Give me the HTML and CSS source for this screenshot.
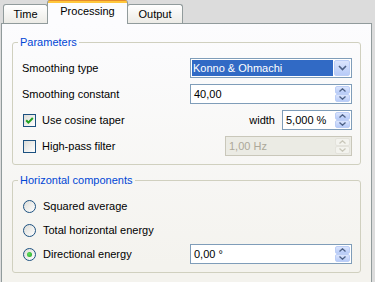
FILE: index.html
```html
<!DOCTYPE html>
<html lang="en">
<head>
    <meta charset="UTF-8">
    <title>Processing</title>
    <link rel="stylesheet" href="styles.css">
</head>
<body>
    <div class="tabs">
        <div class="tab tab-time">Time</div>
        <div class="tab tab-processing active">Processing</div>
        <div class="tab tab-output">Output</div>
    </div>

    <div class="panel">
        <fieldset class="group group-params">
            <legend>Parameters</legend>
            <div class="row">
                <span>Smoothing type</span>
                <div class="combo">
                    <span class="combo-value">Konno &amp; Ohmachi</span>
                    <span class="drop-btn">
                        <svg width="9" height="6" viewBox="0 0 9 6"><path d="M1 1 L4.5 4.5 L8 1" fill="none" stroke="#4d6185" stroke-width="1.6"/></svg>
                    </span>
                </div>
            </div>
            <div class="row">
                <span>Smoothing constant</span>
                <div class="spin spin-wide">
                    <span class="spin-value">40,00</span>
                    <span class="spin-btns">
                        <span class="spin-btn"><svg width="7" height="4" viewBox="0 0 7 4"><path d="M0.5 3.5 L3.5 0.8 L6.5 3.5" fill="none" stroke="#4d6185" stroke-width="1.3"/></svg></span>
                        <span class="spin-btn"><svg width="7" height="4" viewBox="0 0 7 4"><path d="M0.5 0.5 L3.5 3.2 L6.5 0.5" fill="none" stroke="#4d6185" stroke-width="1.3"/></svg></span>
                    </span>
                </div>
            </div>
            <div class="row">
                <label class="check">
                    <span class="box">
                        <svg width="11" height="11" viewBox="0 0 11 11"><path d="M2.2 5.2 L4.4 7.6 L8.8 3" fill="none" stroke="#21a121" stroke-width="2"/></svg>
                    </span>
                    Use cosine taper
                </label>
                <span class="pair">
                    <span>width</span>
                    <div class="spin spin-small">
                        <span class="spin-value">5,000 %</span>
                        <span class="spin-btns">
                            <span class="spin-btn"><svg width="7" height="4" viewBox="0 0 7 4"><path d="M0.5 3.5 L3.5 0.8 L6.5 3.5" fill="none" stroke="#4d6185" stroke-width="1.3"/></svg></span>
                            <span class="spin-btn"><svg width="7" height="4" viewBox="0 0 7 4"><path d="M0.5 0.5 L3.5 3.2 L6.5 0.5" fill="none" stroke="#4d6185" stroke-width="1.3"/></svg></span>
                        </span>
                    </div>
                </span>
            </div>
            <div class="row">
                <label class="check">
                    <span class="box"></span>
                    High-pass filter
                </label>
                <div class="spin spin-medium disabled">
                    <span class="spin-value">1,00 Hz</span>
                    <span class="spin-btns">
                        <span class="spin-btn"><svg width="7" height="4" viewBox="0 0 7 4"><path d="M0.5 3.5 L3.5 0.8 L6.5 3.5" fill="none" stroke="#c9c7ba" stroke-width="1.3"/></svg></span>
                        <span class="spin-btn"><svg width="7" height="4" viewBox="0 0 7 4"><path d="M0.5 0.5 L3.5 3.2 L6.5 0.5" fill="none" stroke="#c9c7ba" stroke-width="1.3"/></svg></span>
                    </span>
                </div>
            </div>
        </fieldset>

        <fieldset class="group group-horiz">
            <legend>Horizontal components</legend>
            <div class="row row-radio">
                <label class="radio"><span class="circle"></span>Squared average</label>
            </div>
            <div class="row row-radio">
                <label class="radio"><span class="circle"></span>Total horizontal energy</label>
            </div>
            <div class="row row-radio">
                <label class="radio"><span class="circle checked"></span>Directional energy</label>
                <div class="spin spin-wide">
                    <span class="spin-value">0,00 °</span>
                    <span class="spin-btns">
                        <span class="spin-btn"><svg width="7" height="4" viewBox="0 0 7 4"><path d="M0.5 3.5 L3.5 0.8 L6.5 3.5" fill="none" stroke="#4d6185" stroke-width="1.3"/></svg></span>
                        <span class="spin-btn"><svg width="7" height="4" viewBox="0 0 7 4"><path d="M0.5 0.5 L3.5 3.2 L6.5 0.5" fill="none" stroke="#4d6185" stroke-width="1.3"/></svg></span>
                    </span>
                </div>
            </div>
        </fieldset>
    </div>
</body>
</html>
```

FILE: styles.css
```css
body {
    margin: 0;
    height: 282px;
    overflow: hidden;
    background-color: #dcdcdc;
    font-family: "Liberation Sans", Arial, sans-serif;
    font-size: 11px;
    color: #000;
}

/* Tabs */
.tabs {
    display: flex;
    align-items: flex-end;
    height: 23px;
    padding-left: 3px;
}

.tab {
    box-sizing: border-box;
    height: 19px;
    border: 1px solid #919b9c;
    border-bottom: none;
    border-radius: 3px 3px 0 0;
    background: linear-gradient(#ffffff, #ecebe6);
    text-align: center;
    line-height: 18px;
}

.tab-time {
    width: 45px;
}

.tab-processing {
    width: 81px;
    margin-left: -1px;
}

.tab-output {
    width: 56px;
    margin-left: -1px;
}

.tab.active {
    position: relative;
    z-index: 1;
    height: 24px;
    margin-bottom: -1px;
    border-top: none;
    background: linear-gradient(#e68b2c 0, #e68b2c 1px, #ffc73c 1px, #ffc73c 3px, #fcfcfe 3px);
    line-height: 22px;
}

/* Panel */
.panel {
    box-sizing: border-box;
    width: 371px;
    height: 270px;
    margin-left: 1px;
    border: 1px solid #919b9c;
    background: linear-gradient(#fcfcfe, #f4f3ee 240px);
    padding-top: 12px;
}

.group {
    margin: 0 10px;
    border: 1px solid #d0d0bf;
    border-radius: 3px;
    padding: 6px 8px 5px 9px;
}

.group legend {
    margin-left: -4px;
    padding: 0 2px;
    line-height: 13px;
    color: #0046d5;
}

.group-horiz {
    margin-top: 9px;
    padding-top: 7px;
    padding-bottom: 6px;
}

.row {
    display: flex;
    align-items: center;
    justify-content: space-between;
    height: 26px;
}

.row-radio {
    height: 24px;
}

.pair {
    display: flex;
    align-items: center;
    gap: 7px;
}

/* Combo box */
.combo {
    box-sizing: border-box;
    display: flex;
    width: 162px;
    height: 20px;
    padding: 1px;
    border: 1px solid #7f9db9;
    background-color: #fff;
}

.combo-value {
    flex: 1;
    margin-right: 1px;
    padding-left: 1px;
    background-color: #316ac5;
    color: #fff;
    line-height: 16px;
}

.drop-btn {
    box-sizing: border-box;
    display: flex;
    align-items: center;
    justify-content: center;
    width: 16px;
    border: 1px solid #bccef6;
    border-radius: 2px;
    background: linear-gradient(#dbe5fd, #b7cbf8);
}

/* Spin boxes */
.spin {
    box-sizing: border-box;
    display: flex;
    height: 20px;
    padding: 1px;
    border: 1px solid #7f9db9;
    background-color: #fff;
}

.spin-wide {
    width: 162px;
}

.spin-small {
    width: 70px;
}

.spin-medium {
    width: 127px;
}

.spin-value {
    flex: 1;
    padding-left: 2px;
    line-height: 16px;
}

.spin-btns {
    display: flex;
    flex-direction: column;
    width: 15px;
}

.spin-btn {
    box-sizing: border-box;
    display: flex;
    align-items: center;
    justify-content: center;
    flex: 1;
    border: 1px solid #bccef6;
    border-radius: 2px;
    background: linear-gradient(#dbe5fd, #b7cbf8);
}

.spin.disabled {
    border-color: #c9c7ba;
    background-color: #ebebe4;
    color: #aca899;
}

.spin.disabled .spin-btn {
    border-color: #e4e3dc;
    background: #f3f3ee;
}

/* Checkboxes and radios */
.check,
.radio {
    display: flex;
    align-items: center;
}

.box {
    box-sizing: border-box;
    display: flex;
    align-items: center;
    justify-content: center;
    width: 13px;
    height: 13px;
    margin: 0 6px 0 1px;
    border: 1px solid #1c5180;
    background: linear-gradient(135deg, #dcdcd7, #ffffff);
}

.circle {
    box-sizing: border-box;
    display: flex;
    align-items: center;
    justify-content: center;
    width: 13px;
    height: 13px;
    margin: 0 7px 0 1px;
    border: 1px solid #1c5180;
    border-radius: 50%;
    background: linear-gradient(135deg, #dcdcd7, #ffffff);
}

.circle.checked::after {
    content: "";
    width: 5px;
    height: 5px;
    border-radius: 50%;
    background: radial-gradient(circle at 40% 40%, #5ee05e, #21a121);
}
```
